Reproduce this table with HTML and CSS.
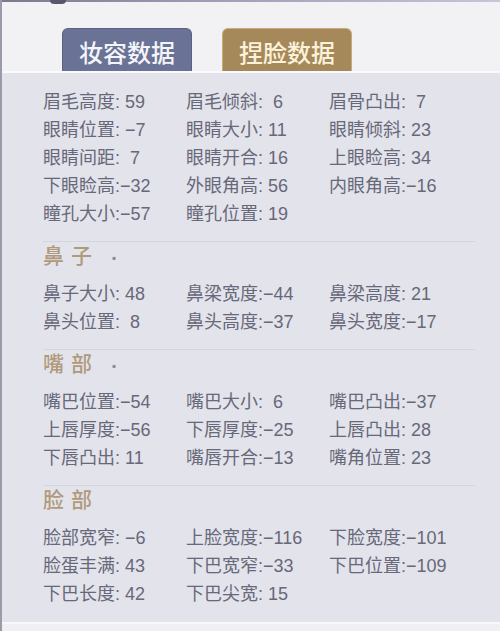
FILE: index.html
```html
<!DOCTYPE html>
<html lang="zh">
<head>
<meta charset="utf-8">
<link rel="stylesheet" href="styles.css">
</head>
<body>
<div class="frame">
  <div class="topbar"><span class="blob"></span></div>
  <div class="tabs">
    <div class="tab tab-makeup">妆容数据</div>
    <div class="tab tab-face">捏脸数据</div>
  </div>
  <div class="panel">
    <div class="grid">
      <div>眉毛高度: 59</div><div>眉毛倾斜:&nbsp; 6</div><div>眉骨凸出:&nbsp; 7</div>
      <div>眼睛位置: −7</div><div>眼睛大小: 11</div><div>眼睛倾斜: 23</div>
      <div>眼睛间距:&nbsp; 7</div><div>眼睛开合: 16</div><div>上眼睑高: 34</div>
      <div>下眼睑高:−32</div><div>外眼角高: 56</div><div>内眼角高:−16</div>
      <div>瞳孔大小:−57</div><div>瞳孔位置: 19</div>
    </div>
    <div class="section">
      <div class="sec-title">鼻子<span class="dot">·</span></div>
      <div class="grid">
        <div>鼻子大小: 48</div><div>鼻梁宽度:−44</div><div>鼻梁高度: 21</div>
        <div>鼻头位置:&nbsp; 8</div><div>鼻头高度:−37</div><div>鼻头宽度:−17</div>
      </div>
    </div>
    <div class="section">
      <div class="sec-title">嘴部<span class="dot">·</span></div>
      <div class="grid">
        <div>嘴巴位置:−54</div><div>嘴巴大小:&nbsp; 6</div><div>嘴巴凸出:−37</div>
        <div>上唇厚度:−56</div><div>下唇厚度:−25</div><div>上唇凸出: 28</div>
        <div>下唇凸出: 11</div><div>嘴唇开合:−13</div><div>嘴角位置: 23</div>
      </div>
    </div>
    <div class="section">
      <div class="sec-title">脸部</div>
      <div class="grid">
        <div>脸部宽窄: −6</div><div>上脸宽度:−116</div><div>下脸宽度:−101</div>
        <div>脸蛋丰满: 43</div><div>下巴宽窄:−33</div><div>下巴位置:−109</div>
        <div>下巴长度: 42</div><div>下巴尖宽: 15</div>
      </div>
    </div>
  </div>
</div>
</body>
</html>
```
FILE: styles.css
```css
html, body {
  margin: 0;
  padding: 0;
  background: #f0f0f4;
}
body {
  width: 500px;
  height: 631px;
  overflow: hidden;
  font-family: "Liberation Sans", "Noto Sans CJK SC", sans-serif;
}
.frame {
  position: relative;
  border-left: 2px solid #9a9aa8;
  min-height: 631px;
  box-sizing: border-box;
  background: #f0f0f4;
}
.topbar {
  position: relative;
  height: 2px;
  background: linear-gradient(to right, #7a7a8e, #9c9cb2 40%, #c6c6da);
}
.blob {
  position: absolute;
  left: 48px;
  top: 0;
  width: 16px;
  height: 4px;
  border-radius: 0 0 6px 6px;
  background: #5a5670;
}
.tabs {
  display: flex;
  gap: 30px;
  padding: 26px 0 0 60px;
  height: 43px;
  background: #f2f2f4;
}
.tab {
  width: 130px;
  height: 43px;
  box-sizing: border-box;
  border-radius: 6px 6px 0 0;
  font-family: "Noto Sans CJK SC", sans-serif;
  font-size: 24px;
  font-weight: 500;
  line-height: 43px;
  text-align: center;
  padding-top: 1px;
}
.tab-makeup {
  background: #6a7296;
  border: 1px solid #5a6184;
  border-bottom: none;
  color: #f4f5fa;
}
.tab-face {
  background: #a6895a;
  border: 1px solid #c8ab78;
  border-bottom: none;
  color: #fbf2dc;
}
.panel {
  background: #e3e3eb;
  border-top: 2px solid #fafafc;
  border-bottom: 2px solid #f8f8fa;
  padding: 15px 0 14px 41px;
  color: #676879;
}
.grid {
  display: grid;
  grid-template-columns: 143px 143px 143px;
  grid-auto-rows: 28px;
  font-size: 18px;
  line-height: 28px;
  white-space: nowrap;
}
.section {
  margin-top: 13px;
  margin-right: 25px;
  border-top: 1px solid #d5d5df;
}
.sec-title {
  height: 24px;
  line-height: 24px;
  margin-bottom: 14px;
  font-family: "Noto Sans CJK SC", sans-serif;
  font-size: 21px;
  font-weight: 500;
  letter-spacing: 7px;
  color: #b09a7c;
}
.dot {
  color: #8a8a98;
  font-size: 14px;
  letter-spacing: 0;
  margin-left: 8px;
}
```
